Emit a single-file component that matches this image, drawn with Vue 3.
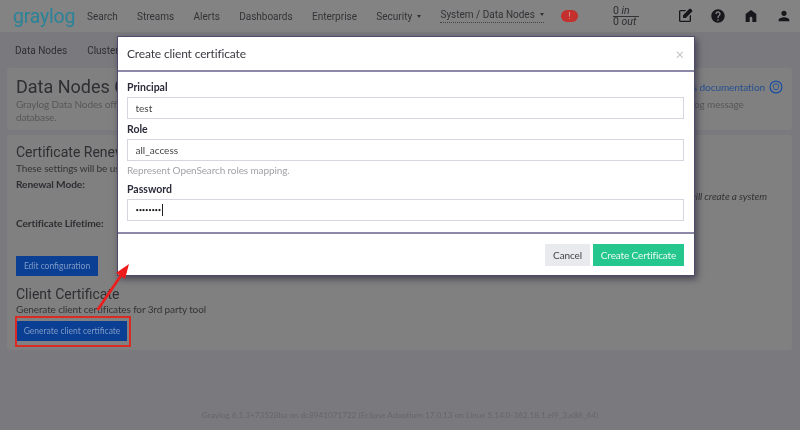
<script setup>
const navItems = [
  { label: 'Search' },
  { label: 'Streams' },
  { label: 'Alerts' },
  { label: 'Dashboards' },
  { label: 'Enterprise' },
  { label: 'Security', caret: true },
  { label: 'System / Data Nodes', caret: true, active: true }
];

const icons = [
  'M5 21q-.825 0-1.413-.588T3 19V5q0-.825.588-1.413T5 3h8.925l-2 2H5v14h14v-6.95l2-2V19q0 .825-.588 1.413T19 21H5Zm4-6v-4.25l9.175-9.175q.3-.3.675-.45t.75-.15q.4 0 .763.15t.662.45L22.425 3q.275.3.425.663T23 4.4q0 .375-.138.738t-.437.662L13.25 15H9Z',
  'M12 2C6.48 2 2 6.48 2 12s4.48 10 10 10 10-4.48 10-10S17.52 2 12 2zm1 17h-2v-2h2v2zm2.07-7.75l-.9.92C13.45 12.9 13 13.5 13 15h-2v-.5c0-1.1.45-2.1 1.17-2.83l1.24-1.26c.37-.36.59-.86.59-1.41 0-1.1-.9-2-2-2s-2 .9-2 2H8c0-2.21 1.79-4 4-4s4 1.79 4 4c0 .88-.36 1.68-.93 2.25z',
  'M4 21V9l8-6 8 6v12h-6v-6a2 2 0 0 0-4 0v6Z',
  'M12 12c2.21 0 4-1.79 4-4s-1.79-4-4-4-4 1.79-4 4 1.79 4 4 4zm0 2c-2.67 0-8 1.34-8 4v2h16v-2c0-2.66-5.33-4-8-4z'
];
</script>

<template>
  <div class="page">
    <header class="nav">
      <span class="logo">graylog</span>
      <nav class="nav-links">
        <a v-for="item in navItems" :key="item.label" class="nav-link" :class="{ active: item.active }">
          {{ item.label }}<i v-if="item.caret" class="caret"></i>
        </a>
      </nav>
      <span class="badge">!</span>
      <div class="throughput">
        <span class="tp-in"><b>0</b> <em>in</em></span>
        <span class="tp-out"><b>0</b> <em>out</em></span>
      </div>
      <div class="nav-icons">
        <svg v-for="d in icons" :key="d" viewBox="0 0 24 24" width="16" height="16"><path :d="d" /></svg>
      </div>
    </header>

    <div class="subnav">
      <a>Data Nodes</a>
      <a>Cluster Configuration</a>
    </div>

    <section class="card intro">
      <div class="intro-head">
        <h1>Data Nodes Configuration</h1>
        <a class="doc-link">Data Nodes documentation
          <svg viewBox="0 0 16 16" width="14" height="14" fill="none" stroke="#1c4f9f">
            <circle cx="8" cy="8" r="6.8" stroke-width="1.4" />
            <path d="M6.2 11c0-1.3-1.4-1.8-1.4-3.5a3.2 3.2 0 0 1 6.4 0c0 1.7-1.4 2.2-1.4 3.5z" stroke-width="1" />
          </svg>
        </a>
      </div>
      <p class="muted">Graylog Data Nodes offer a better integration with Graylog through simplified setup, certificate management and maintenance of your cluster, used as the Graylog message<br>database.</p>
    </section>

    <section class="card settings">
      <h2>Certificate Renewal Policy Configuration</h2>
      <p class="sub">These settings will be used when detecting expiration of certificates.</p>
      <dl class="policy">
        <dt>Renewal Mode:</dt>
        <dd>Automatic<em class="policy-note">Automatic renewal will create a system</em></dd>
        <dt>Certificate Lifetime:</dt>
        <dd>30 days</dd>
      </dl>
      <button class="primary edit">Edit configuration</button>
      <h2 class="client">Client Certificate</h2>
      <p class="sub">Generate client certificates for 3rd party tool</p>
      <button class="primary generate">Generate client certificate</button>
    </section>

    <footer class="footer">Graylog 6.1.3+73528ba on dc8941071722 (Eclipse Adoptium 17.0.13 on Linux 5.14.0-362.18.1.el9_3.x86_64)</footer>

    <div class="modal">
      <div class="modal-head">
        <h3>Create client certificate</h3>
        <span class="close">×</span>
      </div>
      <form class="modal-body" @submit.prevent>
        <label>Principal</label>
        <input type="text" value="test" />
        <label>Role</label>
        <input type="text" value="all_access" />
        <p class="help">Represent OpenSearch roles mapping.</p>
        <label>Password</label>
        <div class="password">••••••••<i class="cursor"></i></div>
      </form>
      <div class="modal-foot">
        <button class="cancel">Cancel</button>
        <button class="create">Create Certificate</button>
      </div>
    </div>

    <div class="red-box"></div>
    <svg class="arrow" width="800" height="430" viewBox="0 0 800 430">
      <path d="M97.5 310 L122 274" stroke="#ee1c1c" stroke-width="2.6" fill="none" />
      <polygon points="129,264 125,279 116,273" fill="#ee1c1c" />
    </svg>
  </div>
</template>

<style scoped>
.page {
  position: relative;
  width: 800px;
  height: 430px;
  overflow: hidden;
  background: #7a7a7e;
  color: #2e2e33;
  font-family: Lato, sans-serif;
  font-size: 10px;
  letter-spacing: -0.12px;
  filter: blur(0.35px);
}

.nav {
  display: flex;
  align-items: center;
  height: 32px;
  padding-left: 13px;
  background: #838383;
  font-family: Roboto, sans-serif;
  letter-spacing: 0;
}

.logo {
  width: 74px;
  color: #2a8398;
  font-size: 19.5px;
  letter-spacing: -0.2px;
}

.nav-links {
  display: flex;
  gap: 19.3px;
  width: 474px;
  font-size: 10px;
  color: #333338;
}

.nav-link {
  display: flex;
  align-items: center;
  white-space: nowrap;
}

.nav-link.active {
  padding-bottom: 2px;
  border-bottom: 1px dotted #444;
}

.caret {
  margin-left: 5px;
  border-top: 3px solid #333;
  border-left: 2.5px solid transparent;
  border-right: 2.5px solid transparent;
}

.badge {
  width: 17px;
  height: 12px;
  border-radius: 6px;
  background: #c4302d;
  color: #d9a09c;
  font-size: 9px;
  line-height: 12px;
  text-align: center;
}

.throughput {
  display: flex;
  flex-direction: column;
  width: 26px;
  margin-left: 35px;
  font-size: 10.5px;
  line-height: 10px;
  color: #2e2e33;
}

.throughput b {
  font-weight: 400;
}

.tp-in {
  border-bottom: 1px solid #333;
}

.nav-icons {
  display: flex;
  gap: 17px;
  margin-left: 38px;
}

.nav-icons svg {
  fill: #17171c;
}

.subnav {
  display: flex;
  gap: 20px;
  align-items: center;
  height: 36px;
  padding-left: 15px;
  font-family: Roboto, sans-serif;
  font-size: 10px;
  letter-spacing: 0;
  color: #2e2e33;
}

.card {
  margin: 0 8px 5px 7px;
  background: #808080;
  border-radius: 3px;
  padding: 0 9px;
}

.intro {
  height: 62px;
  padding-top: 8px;
  box-sizing: border-box;
}

.intro-head {
  display: flex;
  justify-content: space-between;
  align-items: center;
}

h1 {
  margin: 0;
  font-family: Roboto, sans-serif;
  font-size: 18px;
  font-weight: 400;
  letter-spacing: 0;
}

.doc-link {
  display: flex;
  align-items: center;
  gap: 4px;
  color: #274f8f;
  font-size: 10.1px;
}

.muted {
  margin: 1px 0 0;
  color: #575757;
  line-height: 12.5px;
  white-space: nowrap;
}

.settings {
  height: 215px;
  padding-top: 8px;
  box-sizing: border-box;
}

h2 {
  margin: 0;
  font-family: Roboto, sans-serif;
  font-size: 14px;
  font-weight: 400;
  line-height: 19px;
  letter-spacing: 0;
}

.sub {
  margin: 0;
  line-height: 13px;
  color: #333;
}

.policy {
  display: grid;
  grid-template-columns: 140px 1fr;
  grid-auto-rows: 39px;
  margin: 3px 0 0;
}

.policy dt {
  font-size: 10.2px;
  font-weight: 700;
}

.policy dd {
  margin: 0;
  display: flex;
  justify-content: space-between;
  padding-right: 16px;
}

.policy-note {
  margin-top: 12px;
  color: #333;
}

.primary {
  display: block;
  height: 20px;
  padding: 0;
  border: 0;
  background: #0a3f94;
  color: #7f9ac4;
  font-family: Lato, sans-serif;
  font-size: 8.5px;
  white-space: nowrap;
}

.edit {
  width: 82px;
}

.client {
  margin-top: 10px;
  line-height: 17px;
}

.generate {
  width: 110px;
  margin: 5px 0 0 1px;
}

.footer {
  position: absolute;
  left: 0;
  right: 0;
  top: 410px;
  text-align: center;
  font-size: 8.2px;
  letter-spacing: 0;
  color: #66666a;
}

.modal {
  position: absolute;
  left: 117px;
  top: 36px;
  box-sizing: border-box;
  width: 578px;
  height: 239.5px;
  background: #fff;
  border: 1px solid #4d4a6b;
  box-shadow: 2px 3px 7px rgba(30, 28, 50, 0.6);
  display: flex;
  flex-direction: column;
}

.modal-head {
  display: flex;
  justify-content: space-between;
  align-items: center;
  height: 33px;
  padding: 0 10px 0 9px;
  border-bottom: 2px solid #8c88a8;
  flex-shrink: 0;
}

h3 {
  margin: 0;
  font-size: 12px;
  font-weight: 400;
  letter-spacing: -0.15px;
  color: #3a3a42;
}

.close {
  color: #c5c5c8;
  font-size: 15px;
}

.modal-body {
  flex: 0 0 162px;
  box-sizing: border-box;
  padding: 5px 10px 0 9px;
  border-bottom: 2px solid #8c88a8;
}

label {
  display: block;
  height: 16px;
  margin-top: 4px;
  font-size: 10.5px;
  font-weight: 700;
  line-height: 13px;
  letter-spacing: 0;
  color: #2b2b3a;
}

input,
.password {
  display: block;
  box-sizing: border-box;
  width: 100%;
  height: 22px;
  margin: 0;
  padding: 0 7.5px;
  border: 1px solid #d5d7e0;
  color: #444;
  font-family: Lato, sans-serif;
  font-size: 10px;
  line-height: 20px;
  outline: none;
}

.password {
  font-size: 6px;
  letter-spacing: -0.3px;
  color: #222;
}

.cursor {
  display: inline-block;
  width: 1px;
  height: 12px;
  margin-left: 1px;
  vertical-align: middle;
  background: #222;
}

.help {
  margin: 2px 0 6px;
  height: 14px;
  color: #a2a2a8;
  line-height: 14px;
}

.modal-foot {
  display: flex;
  justify-content: flex-end;
  gap: 3px;
  padding: 10px 10px 0;
}

.cancel,
.create {
  height: 22px;
  padding: 0;
  border: 0;
  font-family: Lato, sans-serif;
  font-size: 10px;
  letter-spacing: -0.12px;
}

.cancel {
  width: 45px;
  background: #e9eaee;
  color: #444;
}

.create {
  width: 91px;
  background: #26c78f;
  color: #e8f9f2;
}

.red-box {
  position: absolute;
  left: 15px;
  top: 316px;
  width: 112px;
  height: 27px;
  border: 2px solid #d92a26;
}

.arrow {
  position: absolute;
  left: 0;
  top: 0;
  pointer-events: none;
}
</style>
